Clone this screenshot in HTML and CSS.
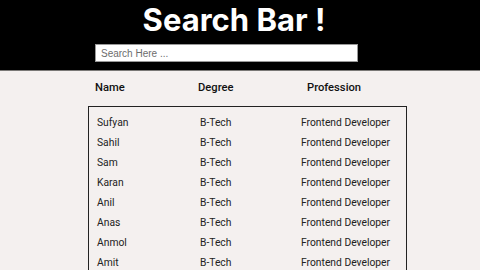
FILE: index.html
```html
<!DOCTYPE html>
<html>
<head>
<meta charset="utf-8">
<link rel="stylesheet" href="styles.css">
</head>
<body>
<header class="top">
  <h1 class="title">Search Bar !</h1>
  <input class="search" type="text" placeholder="Search Here ...">
</header>
<main class="content">
  <div class="head-row">
    <span class="h-name">Name</span>
    <span class="h-degree">Degree</span>
    <span class="h-prof">Profession</span>
  </div>
  <div class="list">
    <div class="row"><span class="c-name">Sufyan</span><span class="c-degree">B-Tech</span><span class="c-prof">Frontend Developer</span></div>
    <div class="row"><span class="c-name">Sahil</span><span class="c-degree">B-Tech</span><span class="c-prof">Frontend Developer</span></div>
    <div class="row"><span class="c-name">Sam</span><span class="c-degree">B-Tech</span><span class="c-prof">Frontend Developer</span></div>
    <div class="row"><span class="c-name">Karan</span><span class="c-degree">B-Tech</span><span class="c-prof">Frontend Developer</span></div>
    <div class="row"><span class="c-name">Anil</span><span class="c-degree">B-Tech</span><span class="c-prof">Frontend Developer</span></div>
    <div class="row"><span class="c-name">Anas</span><span class="c-degree">B-Tech</span><span class="c-prof">Frontend Developer</span></div>
    <div class="row"><span class="c-name">Anmol</span><span class="c-degree">B-Tech</span><span class="c-prof">Frontend Developer</span></div>
    <div class="row"><span class="c-name">Amit</span><span class="c-degree">B-Tech</span><span class="c-prof">Frontend Developer</span></div>
  </div>
</main>
</body>
</html>
```
FILE: styles.css
```css
html, body {
  margin: 0;
  padding: 0;
  background: #f4f0ef;
  overflow: hidden;
  height: 270px;
}
.top {
  background: #000;
  height: 70px;
  border-bottom: 1px solid #7a7876;
  display: flex;
  flex-direction: column;
  align-items: center;
}
.title {
  margin: 0 12px 0 0;
  padding-top: 1px;
  height: 42px;
  font-family: Inter, sans-serif;
  font-weight: 700;
  font-size: 31px;
  line-height: 38px;
  color: #fff;
}
.search {
  box-sizing: border-box;
  width: 263px;
  height: 18px;
  margin-left: -27px;
  margin-top: 1px;
  border: 1px solid #999;
  border-radius: 0;
  padding: 0 5px;
  font-family: "Liberation Sans", Arial, sans-serif;
  font-size: 10px;
  background: #fff;
  outline: none;
}
.search::placeholder {
  color: #6d6d6d;
}
.content {
  padding-left: 88px;
}
.head-row {
  display: flex;
  height: 24px;
  align-items: flex-end;
  font-family: Roboto, sans-serif;
  font-weight: 500;
  font-size: 11.2px;
  color: #111;
  padding-left: 7px;
}
.head-row span {
  line-height: 14px;
}
.h-name { width: 103px; }
.h-degree { width: 109px; }
.list {
  margin-top: 11px;
  width: 317px;
  border: 1px solid #222;
  border-bottom: none;
  padding-top: 5px;
}
.row {
  display: flex;
  height: 20px;
  align-items: center;
  font-family: Roboto, sans-serif;
  font-size: 10.3px;
  color: #222;
  padding-left: 8px;
}
.c-name { width: 103px; }
.c-degree { width: 101px; }
```
